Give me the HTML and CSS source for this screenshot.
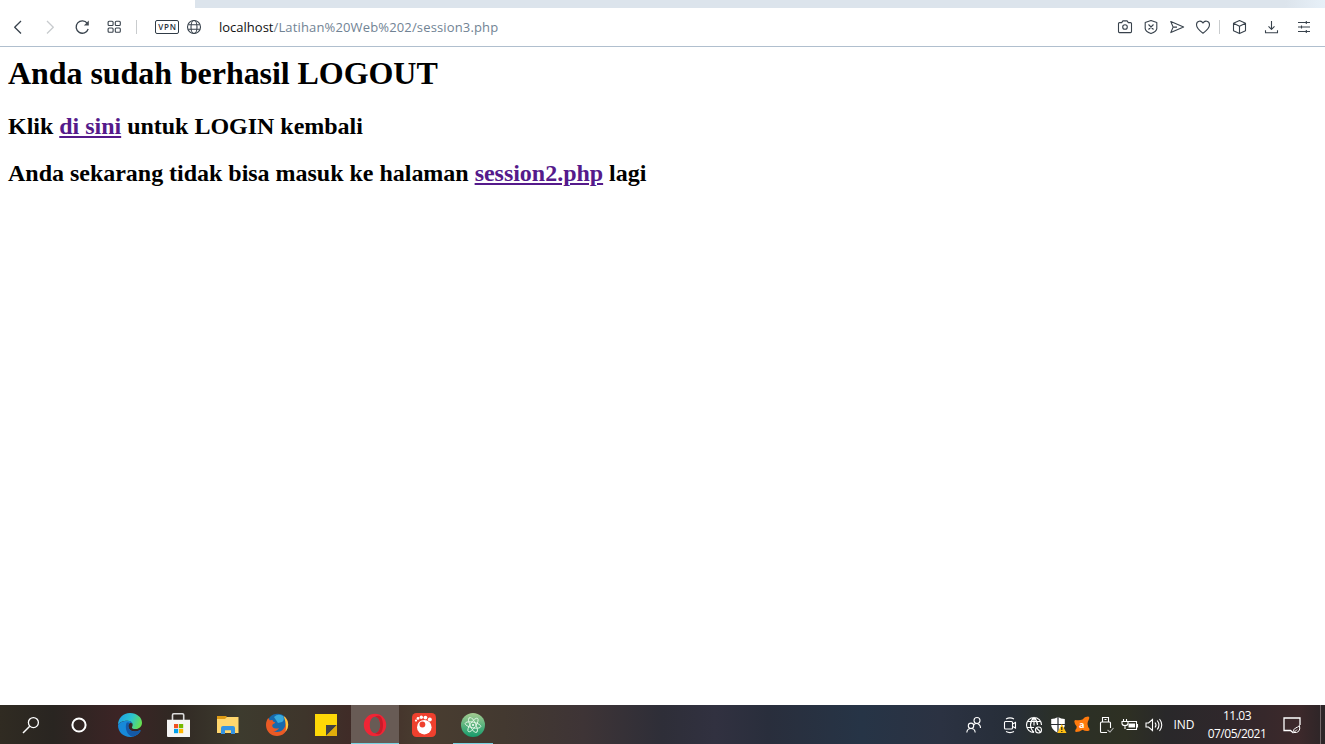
FILE: index.html
```html
<!DOCTYPE html>
<html lang="id">
<head>
<meta charset="utf-8">
<title>localhost</title>
<link rel="stylesheet" href="styles.css">
</head>
<body>
<div class="tabs"><div class="active-tab"></div></div>
<header class="toolbar">
  <nav class="nav">
    <svg class="ic" viewBox="0 0 24 24"><path d="M15 6 8.700 12.200 15 18.500" stroke-width="1.300"/></svg>
    <svg class="ic faded" viewBox="0 0 24 24"><path d="m9 6 6.300 6.200L9 18.500" stroke-width="1.300"/></svg>
    <svg class="ic" viewBox="0 0 24 24"><path d="M17.300 8.300A6.200 6.200 0 1 0 18.200 14" stroke-width="1.300"/><path d="M18.800 5.600v4.800h-4.900z" fill="#454c54" stroke="none"/></svg>
    <svg class="ic" viewBox="0 0 24 24"><rect x="6.100" y="6.300" width="5" height="4.200" rx="1"/><rect x="13.300" y="6.300" width="5" height="4.200" rx="1"/><rect x="6.100" y="13" width="5" height="4.200" rx="1"/><rect x="13.300" y="13" width="5" height="4.200" rx="1"/></svg>
  </nav>
  <i class="sep"></i>
  <span class="vpn">VPN</span>
  <svg class="ic globe" viewBox="0 0 24 24"><circle cx="12" cy="12" r="6.500"/><ellipse cx="12" cy="12" rx="3" ry="6.500"/><path d="M6.300 9.700h11.400M6.300 14.300h11.400"/></svg>
  <div class="url"><b>localhost</b>/Latihan%20Web%202/session3.php</div>
  <div class="actions">
    <svg class="ic" viewBox="0 0 24 24"><path d="M6.500 7.600h2.200l1.200-1.700h4.200l1.200 1.700h2.200q1 0 1 1v8q0 1-1 1h-11q-1 0-1-1v-8q0-1 1-1z"/><circle cx="12" cy="12" r="2.300"/></svg>
    <svg class="ic" viewBox="0 0 24 24"><path d="M12 5.500 17.800 7.400v6.200q-.3 3-5.800 5-5.500-2-5.800-5V7.400zM9.500 9.500l5 5m0-5-5 5"/></svg>
    <svg class="ic" viewBox="0 0 24 24"><path d="m5.800 6.500 12.800 5.600-12.800 5.500 2.300-5.500zM8 12.100h4"/></svg>
    <svg class="ic" viewBox="0 0 24 24"><path d="M12 18.200C7.500 15 5.500 12.500 5.500 9.800c0-4 4.800-4.800 6.500-1.700 1.700-3.100 6.500-2.300 6.500 1.700 0 2.700-2 5.200-6.500 8.400z"/></svg>
    <i class="sep"></i>
    <svg class="ic" viewBox="0 0 24 24"><path d="m11.500 5.600 6 2.700v7.400l-6 2.900-6-2.900V8.300zM5.500 8.300l6 3 6-3M11.500 11.300v7.300"/></svg>
    <svg class="ic" viewBox="0 0 24 24"><path d="M11.500 6v8.300M8.500 11.300l3 3 3-3M5.500 15.200v2.500h12v-2.500"/></svg>
    <svg class="ic" viewBox="0 0 24 24"><path d="M6 7.500h12M6 12h12M6 16.500h12M14.300 6v3M9.500 10.500v3M14.300 15v3"/></svg>
  </div>
</header>
<main class="page">
  <h1>Anda sudah berhasil LOGOUT</h1>
  <h2>Klik <a href="#">di sini</a> untuk LOGIN kembali</h2>
  <h2>Anda sekarang tidak bisa masuk ke halaman <a href="#">session2.php</a> lagi</h2>
</main>
<footer class="taskbar">
  <div class="apps">
    <span class="app"><svg viewBox="0 0 24 24" class="line"><circle cx="13.400" cy="9.600" r="5" stroke-width="1.300"/><path d="M9.700 13.300 3 20" stroke-width="1.500"/></svg></span>
    <span class="app"><svg viewBox="0 0 24 24" class="line"><circle cx="10" cy="12" r="6.600" stroke-width="2"/></svg></span>
    <span class="app"><svg viewBox="0 0 24 24">
      <defs><linearGradient id="eg" x1="0" x2="1" y1=".2" y2=".5"><stop stop-color="#1d9fe6"/><stop offset=".55" stop-color="#2cc4cf"/><stop offset="1" stop-color="#66df51"/></linearGradient></defs>
      <path d="M0 12C0 5 5 0 12 0s12 4.500 12 9.800c0 4-3.300 6.300-6.500 6.300-2.600 0-4.200-1-3.400-2.100 1.400-2 .5-6.200-4.600-6.200C4.500 7.800.5 10 0 12z" fill="url(#eg)"/>
      <path d="M9.500 7.800C4.500 7.800 0 10.500 0 12.500 0 19 5.500 24 12 24c4.500 0 8.500-2.500 10.500-6 .3-.7-.2-1-.8-.7-1.500.9-3 1.300-5 1.300-5 0-8.500-5.600-4.900-8.600 1-.7 2 .2 2.500 1 0-2-2-3.200-4.800-3.200z" fill="#1789d9"/>
      <path d="M8.500 10C6.500 15 9 22.500 14.500 23.700c3.500-.7 6.500-3 8-5.700.3-.7-.2-1-.8-.7-1.500.9-3 1.300-5 1.300-5 0-8.500-5.600-4.900-8.600-1.200-.6-2.500-.6-3.300 0z" fill="#1459a9"/></svg></span>
    <span class="app"><svg viewBox="0 0 24 24"><path d="M5.500 7V2q0-1.200 1.200-1.200h8.800q1.200 0 1.200 1.200v5" fill="none" stroke="#ddd" stroke-width="1.600"/><path d="M0 6.800h23V24H1q-1 0-1-1z" fill="#f5f5f5"/><path d="M7 11h4.200v4.200H7z" fill="#f04f20"/><path d="M12 11h4.200v4.200H12z" fill="#75b900"/><path d="M7 16h4.200v4.200H7z" fill="#00a1ee"/><path d="M12 16h4.200v4.200H12z" fill="#ffb500"/></svg></span>
    <span class="app"><svg viewBox="0 0 24 24"><path d="M1 3h9l1.500 1.500V9H1z" fill="#dd9b15"/><path d="M1 6h8l2-2h11.500v16H1z" fill="#ffd76e"/><path d="M5 21v-6q0-2 2-2h10q2 0 2 2v6h-4v-3.800H9V21z" fill="#3594e2"/></svg></span>
    <span class="app"><svg viewBox="0 0 24 24">
      <circle cx="12.500" cy="11.500" r="10.700" fill="#1769ad"/><path d="M9 4q4-4 9-1 2 4-1 6l-4 1z" fill="#37a9dc"/>
      <path d="M19 3c5 3.500 6 11.500.5 17-2.200 2.300-5 3-7.500 3C6 23 1 18.500 1 12c0-3 1-5.500 2.400-7l1.200 2.200 3-.3c0 1.200.8 2 2.600 2.400-.2 1.500-3 1.700-3 3.200 0 2.500 3 4 6.800 2.500-1 2.500-4 3.500-6 3 6 3 12-1 12.500-7 .2-3-.3-6-1.500-8z" fill="#ea5a25"/><path d="M18.500 3c5.500 4 6 11 2 15.500 1-5 .5-10-2-15.500z" fill="#ffc83d"/></svg></span>
    <span class="app"><svg viewBox="0 0 24 24"><path d="M1 1h22v22H1z" fill="#fed807"/><path d="M12 12h11L12 23z" fill="#404145"/><path d="M23 12v11H12z" fill="#e2ae0b"/></svg></span>
    <span class="app open current"><svg viewBox="0 0 24 24"><path fill-rule="evenodd" d="M12 .8a11.200 11.200 0 1 0 0 22.400A11.200 11.200 0 1 0 12 .8zm0 3c3.200 0 5.200 3.700 5.200 8.200s-2 8.200-5.200 8.200S6.800 16.500 6.800 12 8.800 3.800 12 3.800z" fill="#f02535"/><path d="M12 3.800c6-3.500 8 3 8 8.200s-2 12-8 8.200c3.200 0 5.200-3.700 5.200-8.200S15.200 3.800 12 3.800z" fill="#c91b29"/></svg></span>
    <span class="app"><svg viewBox="0 0 24 24"><rect width="24" height="24" rx="4.500" fill="#ef402e"/><g fill="#fff"><circle cx="12.300" cy="14.200" r="7.300"/><circle cx="4" cy="7.600" r="1.100"/><circle cx="6" cy="5.400" r="1.400"/><circle cx="9.300" cy="4.300" r="1.700"/><circle cx="13.400" cy="4.600" r="1.900"/><circle cx="17.800" cy="6.400" r="2"/></g><circle cx="10.400" cy="11.500" r="2.900" fill="#ef402e"/></svg></span>
    <span class="app open"><svg viewBox="0 0 24 24"><defs><linearGradient id="at" x2="0" y2="1"><stop stop-color="#a4cc91"/><stop offset="1" stop-color="#159b6c"/></linearGradient></defs><circle cx="12" cy="12" r="12" fill="url(#at)"/><g fill="none" stroke="#e2f5e6" stroke-width=".9"><ellipse cx="12" cy="12" rx="8" ry="2.800" transform="rotate(12 12 12)"/><ellipse cx="12" cy="12" rx="8" ry="2.800" transform="rotate(65 12 12)"/><ellipse cx="12" cy="12" rx="8" ry="2.800" transform="rotate(125 12 12)"/></g><circle cx="12" cy="12" r="1" fill="#fff"/></svg></span>
  </div>
  <div class="tray">
    <svg class="line people" viewBox="0 0 24 24"><circle cx="15" cy="7.500" r="3"/><path d="M11.500 12q3-3 6 0 1 1 1 3"/><circle cx="9" cy="12.800" r="2.700"/><path d="M4.800 19.500q.3-4 4.200-4t4.200 4"/></svg>
    <svg class="line" viewBox="0 0 24 24"><rect x="6.500" y="8.500" width="8" height="7.500" rx="1"/><path d="m14.600 11 2.900-1.600v5.700l-2.900-1.600M8 5.900q4-2 8 0M8 18.600q4 2 8 0"/></svg>
    <svg class="line" viewBox="0 0 24 24"><path d="M12 19.500A7.500 7.500 0 1 1 19.500 12M12 19.500Q8.500 16 8.500 12T12 4.500Q15.500 8 15.500 12M5.500 8.500h13M5 14.500h7M12 4.500v8"/><circle cx="16.500" cy="17" r="3"/><path d="m14.500 15 4 4"/></svg>
    <svg viewBox="0 0 24 24"><path d="M12 4q3 2 6.800 2v6q0 4.500-6.800 8-6.800-3.500-6.800-8V6Q9 6 12 4z" fill="#fff"/><path d="M12 4v16M5 11.500h14" stroke="#292d32" stroke-width="1.200"/><path d="m15.800 11 4.700 9H11.300z" fill="#ffbf12"/><path d="M15.800 14v3m0 1v1" stroke="#282317" stroke-width="1.200"/></svg>
    <svg viewBox="0 0 24 24"><path d="M5.500 7q4 .8 7-.5 2-2.800 5.500-3 2 .5 1 2.500-1.500 3-1.500 5 .3 3 2 5 .5 2-1.500 2-3 .3-5.500-1.200-3 2.200-6.500 2.200-1.500-.5-.5-2.200 1.500-1.500 1.200-3.300Q4.500 11 4.300 8.500q0-1.500 1.200-1.500z" fill="#ff7a0d"/><text x="9" y="15" class="avast">a</text></svg>
    <svg class="line" viewBox="0 0 24 24"><path d="M8.500 9V4.500h6V9M13 19.500H7.500q-1 0-1-1V10q0-1 1-1h8q1 0 1 1v5M10.500 6.500h2"/><path d="m13.500 17 2.500 2 3.500-4" stroke="#b5b5b5"/></svg>
    <svg class="line" viewBox="0 0 24 24"><path d="M9.500 8.500h9v8h-10M5.500 6v3m3-3v3M4 8.500h6v2q0 2-3 2t-3-2zM7 12.500V16M19.500 11v3.500"/><path d="M10.500 10.500H17v4h-6.500z" fill="#fff" stroke="none"/></svg>
    <svg class="line" viewBox="0 0 24 24"><path d="M4 10v4h2.500l4 3.500v-11l-4 3.500zM13 9.500q2 2.500 0 5M15.200 7.500q3.500 4.500 0 9M17.500 6q4.500 6 0 12"/></svg>
    <span class="lang">IND</span>
    <div class="clock"><span>11.03</span><span>07/05/2021</span></div>
    <svg class="line note" viewBox="0 0 24 24"><path d="M13.500 20 10.500 17.500H4V5h16v7" stroke-width="1.300"/><path d="M14 19.500q-1.500-3 1.500-4.500 2-.5 4-2.500 1 4-1 6-2 1.500-4.500 1zl3-3" stroke-width="1"/></svg>
    <i class="desktop"></i>
  </div>
</footer>
</body>
</html>
```
FILE: styles.css
```css
* { box-sizing: border-box; }
body {
  margin: 0;
  height: 744px;
  overflow: hidden;
  display: flex;
  flex-direction: column;
  background: #fff;
  font-family: "Open Sans", "Noto Sans", sans-serif;
}
svg { width: 24px; height: 24px; flex: none; display: block; }
.tabs { height: 8px; flex: none; background: linear-gradient(90deg, #dce4ec 97%, #e7f0f8); }
.active-tab { width: 195px; height: 8px; background: #fff; }
.toolbar {
  height: 39px;
  flex: none;
  display: flex;
  align-items: center;
  padding-left: 6px;
  border-bottom: 1px solid #b0bfce;
}
.ic { fill: none; stroke: #38424c; stroke-width: 1.1; stroke-linejoin: round; }
.faded { stroke: #c8cbce; }
.nav { display: flex; gap: 8px; }
.sep { width: 1px; height: 14px; background: #c9ccce; flex: none; }
.nav + .sep { margin-left: 10px; }
.vpn {
  width: 24px;
  height: 14px;
  margin-left: 18px;
  border: 1px solid #303b46;
  border-radius: 2px;
  font: 600 8px/12px "Open Sans", sans-serif;
  letter-spacing: .8px;
  text-align: center;
  padding-left: 1px;
  color: #25303b;
}
.globe { margin-left: 3px; }
.url { margin-left: 13px; font-size: 13px; line-height: 20px; color: #718394; white-space: nowrap; letter-spacing: .15px; }
.url b { font-weight: 400; color: #111; letter-spacing: 0; }
.actions { margin-left: auto; display: flex; align-items: center; gap: 2px; padding-right: 9px; }
.actions .sep { margin: 0 6px 0 2px; }
.actions .sep ~ svg + svg { margin-left: 6px; }
.page { flex: 1; padding: 8px; font-family: "Liberation Serif", serif; color: #000; }
.page h1 { margin: 0 0 21px; font-size: 32px; line-height: 37px; letter-spacing: -.06px; white-space: nowrap; }
.page h2 { margin: 0 0 20px; font-size: 24px; line-height: 27px; white-space: nowrap; letter-spacing: -.02px; }
.page a { color: #551a8b; }
.taskbar {
  height: 39px;
  flex: none;
  display: flex;
  justify-content: space-between;
  color: #fff;
  background: linear-gradient(90deg, #302b22 0, #292521 4%, #3c2425 9%, #302823 13%, #3d3b2e 18%, #3e352b 23%, #402a27 27%, #493d30 32%, #433930 38%, #3e3436 44%, #2e2e38 50%, #313140 54%, #292e3c 58%, #263446 65%, #2b3242 71%, #272e39 76%, #2b3027 80%, #2e3023 85%, #29282a 88%, #30272b 93%, #3d292b 98%, #2c2527 100%);
}
.apps { display: flex; gap: 1px; padding-left: 8px; }
.app { width: 48px; height: 39px; display: flex; align-items: center; justify-content: center; }
.open { background: linear-gradient(#76d3e2, #76d3e2) center bottom / 40px 1px no-repeat; }
.open.current { background-color: #685b55; background-size: 48px 1px; }
.line { fill: none; stroke: #fff; stroke-width: 1.1; }
.tray { display: flex; align-items: center; font-size: 12px; }
.people { margin-right: 12px; }
.avast { fill: #fff; font: bold 9px "Open Sans", sans-serif; }
.lang { width: 36px; text-align: center; font-size: 12px; }
.clock { width: 70px; display: flex; flex-direction: column; align-items: center; line-height: 18px; font-size: 12px; letter-spacing: -.5px; }
.note { margin-left: 8px; }
.desktop { width: 1px; height: 39px; margin: 0 4px 0 16px; background: #75686a; }
```
